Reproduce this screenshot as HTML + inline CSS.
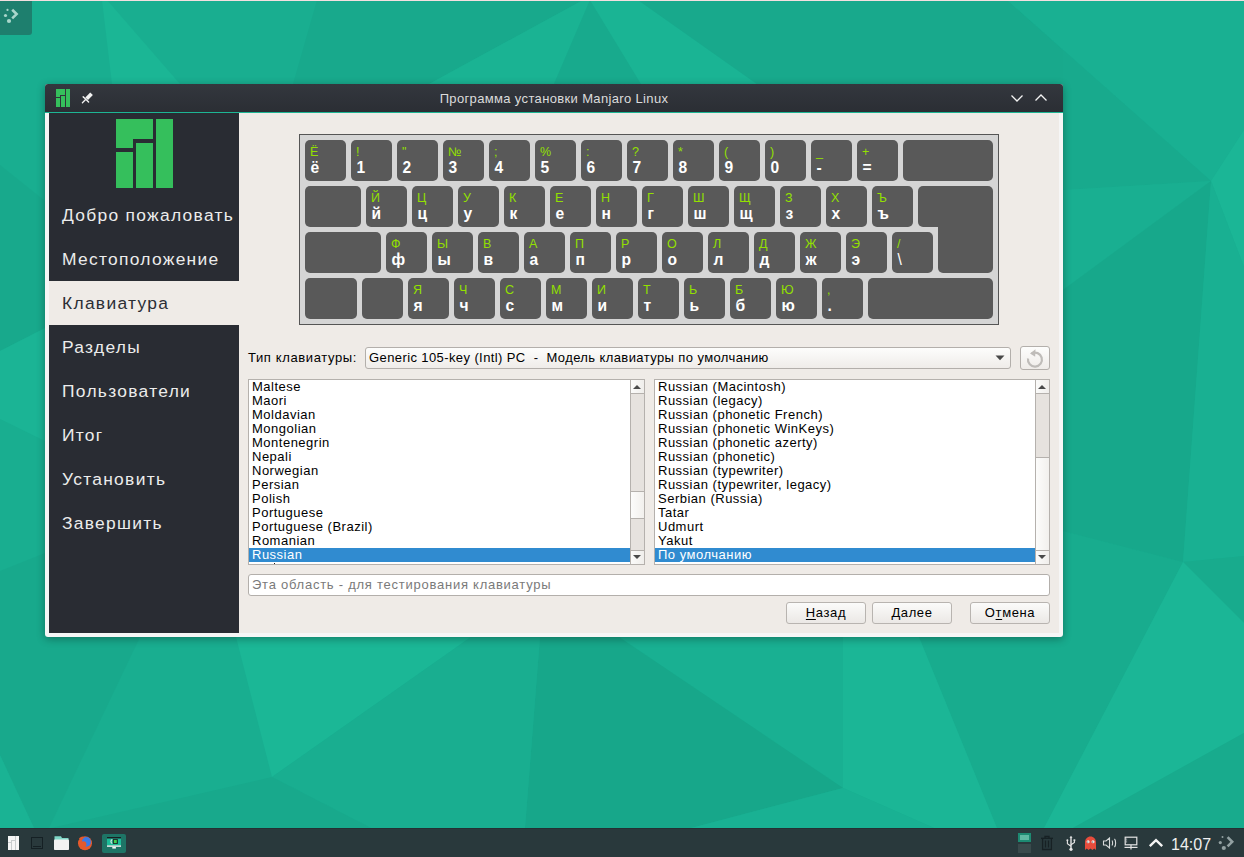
<!DOCTYPE html>
<html><head><meta charset="utf-8">
<style>
*{margin:0;padding:0;box-sizing:border-box}
html,body{width:1244px;height:857px;overflow:hidden;background:#19b092;font-family:"Liberation Sans",sans-serif}
.a{position:absolute}
#bg{position:absolute;left:0;top:0;display:block}
#topline{left:0;top:0;width:1244px;height:1px;background:#f4dfe0}
#tlbtn{left:0;top:1px;width:32px;height:34px;background:#1e7f6e;border-bottom-right-radius:3px}
#win{left:45px;top:84px;width:1018px;height:553px;background:#f6f6f6;border-radius:3px;box-shadow:0 2px 8px rgba(0,0,0,.32)}
#title{left:45px;top:84px;width:1018px;height:28px;background:linear-gradient(#33373e,#2b2e34);border-radius:3px 3px 0 0}
#ttext{left:0;top:85px;width:1108px;text-align:center;font-size:13px;line-height:28px;color:#dcdcdc;letter-spacing:.35px;white-space:nowrap}
#tline{left:45px;top:112px;width:1018px;height:1px;background:#1db594}
#content{left:49px;top:113px;width:1010px;height:520px;background:#efebe7}
#side{left:49px;top:113px;width:190px;height:520px;background:#292c33}
.si{position:absolute;left:49px;width:190px;height:44px;font-size:17.4px;letter-spacing:1.3px;color:#ececec;white-space:nowrap}
.si span{position:absolute;left:13px;top:0;line-height:1}
.si.sel{background:#efebe7;color:#2b2e35}
#kb{left:299px;top:134px;width:700px;height:191px;background:#d5d5d5;border:1px solid #555}
.k{position:absolute;height:41px;background:#595959;border-radius:5px}
.k b{position:absolute;left:5.5px;top:19.6px;font-size:15.6px;color:#fff;font-weight:bold;line-height:1}
.k i{position:absolute;left:5px;top:6px;font-size:12.5px;color:#93e000;font-style:normal;line-height:1}
.txt{position:absolute;font-size:13px;color:#000;white-space:nowrap;letter-spacing:.4px;line-height:1}
.list{position:absolute;background:#fff;border:1px solid #b5b1ad;overflow:hidden}
.row{position:absolute;left:0;height:14px;width:100%;font-size:13px;line-height:14px;padding-left:3px;white-space:nowrap;letter-spacing:.5px;color:#000}
.row.s{background:#308bd0;color:#fff}
.sb{position:absolute;top:0;width:15px;bottom:0;background:#e6e2de;border-left:1px solid #b5b1ad}
.btn{position:absolute;height:22px;border:1px solid #b8b4b0;border-radius:3px;background:linear-gradient(#fbfbfa,#ebe8e5);font-size:13px;text-align:center;line-height:20px;color:#000;letter-spacing:.6px}
#tb{left:0;top:828px;width:1244px;height:29px;background:#29393c;border-top:1px solid #243034}
.combo{border:1px solid #b3afab;border-radius:3px;background:linear-gradient(#fdfdfc,#efece9)}
.inp{border:1px solid #b3afab;border-radius:3px;background:#fff}
.sbb{position:absolute;left:0;width:14px;height:14px;background:linear-gradient(90deg,#fbfbfa,#efedea)}
.sbb:first-child{border-bottom:1px solid #b5b1ad}
.sbb:last-child{border-top:1px solid #b5b1ad}
.thumb{position:absolute;left:0;width:14px;background:linear-gradient(90deg,#fcfcfb,#f1efec);border-top:1px solid #b5b1ad;border-bottom:1px solid #b5b1ad}
.up{position:absolute;left:2px;top:5px;width:0;height:0;border-left:4px solid transparent;border-right:4px solid transparent;border-bottom:4px solid #4a4a4a}
.dn{position:absolute;left:2px;top:4px;width:0;height:0;border-left:4px solid transparent;border-right:4px solid transparent;border-top:4px solid #4a4a4a}
.btn u{text-underline-offset:2px}

</style></head><body>
<svg id="bg" width="1244" height="857" viewBox="0 0 1244 857">
<rect width="1244" height="857" fill="#19ae90"/>
<polygon points="102,0 107,0 180,84 112,84" fill="#1bb695"/>
<polygon points="317,0 583,0 429,84 293,84" fill="#18a98c"/>
<polygon points="583,0 590,0 554,84 429,84" fill="#1ab393"/>
<polygon points="590,0 554,84 641,84" fill="#18aa8d"/>
<polygon points="590,0 638,0 757,84 641,84" fill="#1ab494"/>
<polygon points="638,0 1007,0 1063,50 1063,84 757,84" fill="#18a98c"/>
<polygon points="1007,0 1244,0 1244,130 1211,181" fill="#19b092"/>
<polygon points="1211,181 1244,130 1244,267" fill="#1bb696"/>
<polygon points="1007,0 1211,181 1063,190 1063,50" fill="#18aa8d"/>
<polygon points="1063,190 1211,181 1063,290" fill="#19af91"/>
<polygon points="919,637 1063,637 1063,531 1183,562 1044,828 997,828" fill="#18ac8e"/>
<polygon points="843,637 919,637 997,828 934,828 843,788" fill="#1bb696"/>
<polygon points="619,637 843,637 843,788" fill="#19b092"/>
<polygon points="540,637 619,637 843,788 691,828 525,828" fill="#17a78a"/>
<polygon points="691,828 843,788 934,828" fill="#19b193"/>
<polygon points="236,637 471,637 272,777" fill="#1bb796"/>
<polygon points="471,637 540,637 525,828 371,828 272,777" fill="#19ae90"/>
<polygon points="51,828 272,777 371,828" fill="#18a98c"/>
<polygon points="0,637 140,637 49,828 34,828 0,755" fill="#18a98c"/>
<polygon points="0,755 34,828 0,828" fill="#1ab394"/>
<polygon points="0,165 45,201 45,328 0,351" fill="#18a98c"/>
<polygon points="0,351 45,328 45,441 0,419" fill="#1bb495"/>
<polygon points="0,571 45,553 45,637 0,637" fill="#18a98c"/>
<polygon points="1063,290 1211,181 1183,562 1063,531" fill="#17a88b"/>
<polygon points="1211,181 1244,267 1244,556 1183,562" fill="#19b092"/>
<polygon points="1183,562 1244,556 1244,623" fill="#18ab8d"/>
<polygon points="1183,562 1244,623 1244,733 1073,828 1044,828" fill="#1bb696"/>
<polygon points="1073,828 1244,733 1244,828" fill="#18ab8d"/>
</svg>

<div id="topline" class="a"></div>
<div id="tlbtn" class="a"></div>
<svg class="a" style="left:0;top:0" width="32" height="34" viewBox="0 0 32 34"><g fill="#a9d6cb"><circle cx="7.5" cy="9.9" r="1.1"/><circle cx="5.5" cy="15.5" r="1.6"/><circle cx="9" cy="21" r="2.1"/></g><path d="M12.2 9.8 L16.6 14.1 L12.2 18.4" fill="none" stroke="#a9d6cb" stroke-width="2.6"/></svg>

<div id="win" class="a"></div>
<div id="title" class="a"></div>
<svg class="a" style="left:56px;top:89px" width="14" height="18" viewBox="0 0 14 18"><g fill="#35bf5c"><path d="M0 0H9V6H4V8H0Z"/><rect x="0" y="9" width="4" height="9"/><rect x="5" y="7" width="4" height="11"/><rect x="10" y="0" width="4" height="18"/></g></svg>
<svg class="a" style="left:80px;top:90px" width="15" height="15" viewBox="0 0 15 15"><g stroke="#f2f2f2" stroke-linecap="round" fill="none"><path d="M3.2 6.7L8.6 12.1" stroke-width="1.4"/><path d="M5.4 9.8L2.4 12.8" stroke-width="1.3"/></g><path d="M5.3 7.4L10.2 2.4L12.9 5.1L8 10Z" fill="#f2f2f2"/></svg>
<div id="ttext" class="a">Программа установки Manjaro Linux</div>
<svg class="a" style="left:1009px;top:92px" width="40" height="12" viewBox="0 0 40 12"><g fill="none" stroke="#f4f4f4" stroke-width="1.3"><path d="M2.5 3.5 L8 9 L13.5 3.5"/><path d="M26.5 8.5 L32 3 L37.5 8.5"/></g></svg>
<div id="tline" class="a"></div>
<div id="content" class="a"></div>

<div id="side" class="a"></div>
<svg class="a" style="left:116px;top:119px" width="57" height="69" viewBox="0 0 57 69"><g fill="#35bf5c"><path d="M0 0H37V20H17V29H0Z"/><rect x="0" y="33" width="17" height="36"/><rect x="20" y="24" width="17" height="45"/><rect x="40" y="0" width="17" height="69"/></g></svg>
<div class="si" style="top:193px"><span style="top:14px">Добро пожаловать</span></div>
<div class="si" style="top:237px"><span style="top:14px">Местоположение</span></div>
<div class="si sel" style="top:281px"><span style="top:14px">Клавиатура</span></div>
<div class="si" style="top:325px"><span style="top:14px">Разделы</span></div>
<div class="si" style="top:369px"><span style="top:14px">Пользователи</span></div>
<div class="si" style="top:413px"><span style="top:14px">Итог</span></div>
<div class="si" style="top:457px"><span style="top:14px">Установить</span></div>
<div class="si" style="top:501px"><span style="top:14px">Завершить</span></div>

<div id="kb" class="a"></div>
<div class="k" style="left:305px;top:140px;width:41px"><i>Ё</i><b>ё</b></div>
<div class="k" style="left:351px;top:140px;width:41px"><i>!</i><b>1</b></div>
<div class="k" style="left:397px;top:140px;width:41px"><i>"</i><b>2</b></div>
<div class="k" style="left:443px;top:140px;width:41px"><i>№</i><b>3</b></div>
<div class="k" style="left:489px;top:140px;width:41px"><i>;</i><b>4</b></div>
<div class="k" style="left:535px;top:140px;width:41px"><i>%</i><b>5</b></div>
<div class="k" style="left:581px;top:140px;width:41px"><i>:</i><b>6</b></div>
<div class="k" style="left:627px;top:140px;width:41px"><i>?</i><b>7</b></div>
<div class="k" style="left:673px;top:140px;width:41px"><i>*</i><b>8</b></div>
<div class="k" style="left:719px;top:140px;width:41px"><i>(</i><b>9</b></div>
<div class="k" style="left:765px;top:140px;width:41px"><i>)</i><b>0</b></div>
<div class="k" style="left:811px;top:140px;width:41px"><i>_</i><b>-</b></div>
<div class="k" style="left:857px;top:140px;width:41px"><i>+</i><b>=</b></div>
<div class="k" style="left:903px;top:140px;width:90px"></div>
<div class="k" style="left:305px;top:186px;width:56px"></div>
<div class="k" style="left:366px;top:186px;width:41px"><i>Й</i><b>й</b></div>
<div class="k" style="left:412px;top:186px;width:41px"><i>Ц</i><b>ц</b></div>
<div class="k" style="left:458px;top:186px;width:41px"><i>У</i><b>у</b></div>
<div class="k" style="left:504px;top:186px;width:41px"><i>К</i><b>к</b></div>
<div class="k" style="left:550px;top:186px;width:41px"><i>Е</i><b>е</b></div>
<div class="k" style="left:596px;top:186px;width:41px"><i>Н</i><b>н</b></div>
<div class="k" style="left:642px;top:186px;width:41px"><i>Г</i><b>г</b></div>
<div class="k" style="left:688px;top:186px;width:41px"><i>Ш</i><b>ш</b></div>
<div class="k" style="left:734px;top:186px;width:41px"><i>Щ</i><b>щ</b></div>
<div class="k" style="left:780px;top:186px;width:41px"><i>З</i><b>з</b></div>
<div class="k" style="left:826px;top:186px;width:41px"><i>Х</i><b>х</b></div>
<div class="k" style="left:872px;top:186px;width:41px"><i>Ъ</i><b>ъ</b></div>
<div class="k" style="left:918px;top:186px;width:75px;height:41px"></div>
<div class="k" style="left:938px;top:200px;width:55px;height:73px;border-top-left-radius:0;border-top-right-radius:0"></div>
<div class="k" style="left:305px;top:232px;width:76px"></div>
<div class="k" style="left:386px;top:232px;width:41px"><i>Ф</i><b>ф</b></div>
<div class="k" style="left:432px;top:232px;width:41px"><i>Ы</i><b>ы</b></div>
<div class="k" style="left:478px;top:232px;width:41px"><i>В</i><b>в</b></div>
<div class="k" style="left:524px;top:232px;width:41px"><i>А</i><b>а</b></div>
<div class="k" style="left:570px;top:232px;width:41px"><i>П</i><b>п</b></div>
<div class="k" style="left:616px;top:232px;width:41px"><i>Р</i><b>р</b></div>
<div class="k" style="left:662px;top:232px;width:41px"><i>О</i><b>о</b></div>
<div class="k" style="left:708px;top:232px;width:41px"><i>Л</i><b>л</b></div>
<div class="k" style="left:754px;top:232px;width:41px"><i>Д</i><b>д</b></div>
<div class="k" style="left:800px;top:232px;width:41px"><i>Ж</i><b>ж</b></div>
<div class="k" style="left:846px;top:232px;width:41px"><i>Э</i><b>э</b></div>
<div class="k" style="left:892px;top:232px;width:41px"><i>/</i><b style="font-weight:normal">\</b></div>
<div class="k" style="left:305px;top:278px;width:52px"></div>
<div class="k" style="left:362px;top:278px;width:41px"></div>
<div class="k" style="left:408px;top:278px;width:41px"><i>Я</i><b>я</b></div>
<div class="k" style="left:454px;top:278px;width:41px"><i>Ч</i><b>ч</b></div>
<div class="k" style="left:500px;top:278px;width:41px"><i>С</i><b>с</b></div>
<div class="k" style="left:546px;top:278px;width:41px"><i>М</i><b>м</b></div>
<div class="k" style="left:592px;top:278px;width:41px"><i>И</i><b>и</b></div>
<div class="k" style="left:638px;top:278px;width:41px"><i>Т</i><b>т</b></div>
<div class="k" style="left:684px;top:278px;width:41px"><i>Ь</i><b>ь</b></div>
<div class="k" style="left:730px;top:278px;width:41px"><i>Б</i><b>б</b></div>
<div class="k" style="left:776px;top:278px;width:41px"><i>Ю</i><b>ю</b></div>
<div class="k" style="left:822px;top:278px;width:41px"><i>,</i><b>.</b></div>
<div class="k" style="left:868px;top:278px;width:125px"></div>

<div class="txt" style="left:248px;top:351px;letter-spacing:.62px">Тип клавиатуры:</div>
<div class="combo a" style="left:365px;top:347px;width:646px;height:22px"></div>
<div class="txt" style="left:369px;top:351px">Generic 105-key (Intl) PC&nbsp; -&nbsp; Модель клавиатуры по умолчанию</div>
<svg class="a" style="left:995px;top:355px" width="10" height="6" viewBox="0 0 10 6"><path d="M0.5 0.5H9.5L5 5.2Z" fill="#484848"/></svg>
<div class="combo a" style="left:1020px;top:346px;width:30px;height:24px"></div>
<svg class="a" style="left:1024px;top:348px" width="22" height="20" viewBox="0 0 22 20"><g fill="none" stroke="#bfbcb9" stroke-width="2.2"><path d="M7.6 5.4 A7 7 0 1 1 4.0 10.5"/></g><path d="M11.5 1.2 L6.0 5.6 L11.2 8.8Z" fill="#bfbcb9"/></svg>
<div class="list" style="left:248px;top:379px;width:397px;height:186px">
<div class="row" style="top:0px">Maltese</div>
<div class="row" style="top:14px">Maori</div>
<div class="row" style="top:28px">Moldavian</div>
<div class="row" style="top:42px">Mongolian</div>
<div class="row" style="top:56px">Montenegrin</div>
<div class="row" style="top:70px">Nepali</div>
<div class="row" style="top:84px">Norwegian</div>
<div class="row" style="top:98px">Persian</div>
<div class="row" style="top:112px">Polish</div>
<div class="row" style="top:126px">Portuguese</div>
<div class="row" style="top:140px">Portuguese (Brazil)</div>
<div class="row" style="top:154px">Romanian</div>
<div class="row s" style="top:168px">Russian</div>
<div class="row" style="top:182px">Serbian</div>
<div class="sb" style="left:381px"><div class="sbb" style="top:0"><div class="up"></div></div><div class="thumb" style="top:111px;height:28px"></div><div class="sbb" style="bottom:0"><div class="dn"></div></div></div>
</div>
<div class="list" style="left:654px;top:379px;width:396px;height:186px">
<div class="row" style="top:0px">Russian (Macintosh)</div>
<div class="row" style="top:14px">Russian (legacy)</div>
<div class="row" style="top:28px">Russian (phonetic French)</div>
<div class="row" style="top:42px">Russian (phonetic WinKeys)</div>
<div class="row" style="top:56px">Russian (phonetic azerty)</div>
<div class="row" style="top:70px">Russian (phonetic)</div>
<div class="row" style="top:84px">Russian (typewriter)</div>
<div class="row" style="top:98px">Russian (typewriter, legacy)</div>
<div class="row" style="top:112px">Serbian (Russia)</div>
<div class="row" style="top:126px">Tatar</div>
<div class="row" style="top:140px">Udmurt</div>
<div class="row" style="top:154px">Yakut</div>
<div class="row s" style="top:168px">По умолчанию</div>
<div class="sb" style="left:380px"><div class="sbb" style="top:0"><div class="up"></div></div><div class="thumb" style="top:77px;height:94px"></div><div class="sbb" style="bottom:0"><div class="dn"></div></div></div>
</div>
<div class="inp a" style="left:248px;top:574px;width:802px;height:22px"></div>
<div class="txt" style="left:252px;top:578px;color:#7a7a7a;letter-spacing:.75px">Эта область - для тестирования клавиатуры</div>
<div class="btn" style="left:786px;top:602px;width:80px"><u>Н</u>азад</div>
<div class="btn" style="left:872px;top:602px;width:80px"><u>Д</u>алее</div>
<div class="btn" style="left:970px;top:602px;width:80px">О<u>т</u>мена</div>
<div class="a" style="left:274px;top:563px;width:1px;height:1px;background:#222"></div>

<div id="tb" class="a"></div>
<svg class="a" style="left:8px;top:836px" width="11" height="14" viewBox="0 0 11 14"><g fill="#f6f6f6"><path d="M0 0H7V4H3V6H0Z"/><rect x="0" y="7" width="3" height="7"/><rect x="4" y="5" width="3" height="9"/><rect x="8" y="0" width="3" height="14"/></g><g fill="#c9cdce"><rect x="3" y="4" width="1" height="10"/><rect x="7" y="0" width="1" height="14"/><rect x="0" y="6" width="3" height="1"/><rect x="3" y="4" width="4" height="1"/></g></svg>
<div class="a" style="left:31px;top:837px;width:12px;height:12px;border:1px solid #152024"></div>
<div class="a" style="left:33px;top:846px;width:8px;height:1px;background:#152024"></div>
<svg class="a" style="left:53px;top:835px" width="17" height="16" viewBox="0 0 17 16"><path d="M1.5 1.2H8L9 3H15.5V6H1.5Z" fill="#7fd6c6"/><rect x="1" y="4.6" width="15" height="10.4" rx="0.8" fill="#f2f2f2"/></svg>
<svg class="a" style="left:77px;top:835px" width="16" height="16" viewBox="0 0 16 16"><circle cx="8" cy="8.2" r="7" fill="#e55a2c"/><ellipse cx="9.4" cy="6.9" rx="4.5" ry="4.9" fill="#3b7ae6"/><circle cx="6.4" cy="9.2" r="3" fill="#e55a2c"/><path d="M2 3.5C3.5 1.8 5.5 1.3 6.5 2.2C5.8 3.2 5 4.2 4.6 5.6Z" fill="#e55a2c"/></svg>
<div class="a" style="left:102px;top:834px;width:24px;height:19px;background:#1e7566;border-radius:2px"></div>
<svg class="a" style="left:106px;top:836px" width="16" height="14" viewBox="0 0 16 14"><rect x="1" y="1" width="14" height="1.6" fill="#1b1f22"/><rect x="1" y="2.6" width="14" height="6.8" fill="#1cbc98"/><rect x="1" y="9.4" width="14" height="1.4" fill="#f4f4f4"/><rect x="6.3" y="10.8" width="3.6" height="1.8" fill="#f4f4f4"/><rect x="6.8" y="3.1" width="5" height="4.8" fill="#1b1f22"/><rect x="7.8" y="3.9" width="3" height="3.2" fill="#3fcf52"/><path d="M6.3 3.4 A2.3 2.3 0 0 0 6.3 7.6" fill="none" stroke="#e8e8e8" stroke-width="1.1"/></svg>

<div class="a" style="left:1018px;top:833px;width:13px;height:9px;background:#1d8a72;border:1px solid #1d8a72"><div style="position:absolute;left:1px;top:1px;right:1px;bottom:1px;background:#5fb8a2"></div></div>
<div class="a" style="left:1018px;top:844px;width:13px;height:9px;background:#3a4a4c"></div>
<svg class="a" style="left:1040px;top:835px" width="14" height="16" viewBox="0 0 14 16"><g fill="none" stroke="#172124" stroke-width="1.3"><path d="M1 3.3H13"/><path d="M5 3V1.5H9V3"/><path d="M2.6 3.5V14.5H11.4V3.5"/><path d="M5.5 5.5V12.5M8.5 5.5V12.5"/></g></svg>
<svg class="a" style="left:1066px;top:835px" width="10" height="17" viewBox="0 0 10 17"><g fill="#e6e6e6"><circle cx="5" cy="14.3" r="1.6"/><path d="M4.3 2H5.7V14H4.3Z"/><path d="M3.5 2.8L5 0.8L6.5 2.8Z"/></g><g fill="none" stroke="#e6e6e6" stroke-width="1.1"><path d="M5 11.2L1.4 8.6V5.6"/><path d="M5 9.8L8.4 7.4V5.4"/></g><circle cx="1.4" cy="5.2" r="1" fill="#e6e6e6"/><rect x="7.5" y="4.3" width="1.8" height="1.8" fill="#e6e6e6"/></svg>
<svg class="a" style="left:1084px;top:836px" width="13" height="15" viewBox="0 0 13 15"><path d="M1 6.5C1 3 3.4 0.6 6.5 0.6S12 3 12 6.5V14L10.2 12.6L8.4 14L6.5 12.6L4.6 14L2.8 12.6L1 14Z" fill="#e74c3c"/><circle cx="4.1" cy="5.8" r="1.5" fill="#f2f2f2"/><circle cx="9" cy="5.8" r="1.5" fill="#f2f2f2"/><circle cx="3.8" cy="6" r="0.6" fill="#333"/><circle cx="8.7" cy="6" r="0.6" fill="#333"/></svg>
<svg class="a" style="left:1102px;top:837px" width="16" height="12" viewBox="0 0 16 12"><g fill="none" stroke="#d7dada" stroke-width="1.1"><path d="M1.5 4H4L7.5 1V11L4 8H1.5Z"/><path d="M10 3.5C10.8 4.5 10.8 7.5 10 8.5"/><path d="M12.5 1.8C14 3.5 14 8.5 12.5 10.2"/></g></svg>
<svg class="a" style="left:1124px;top:836px" width="14" height="15" viewBox="0 0 14 15"><g fill="none" stroke="#e4e4e4" stroke-width="1.2"><rect x="1.2" y="1.2" width="11.6" height="7.6"/><path d="M7 9V13.6"/><path d="M0.5 11.4H13.5"/></g><path d="M2.6 2.6V7" stroke="#e4e4e4" stroke-width="0.8" stroke-dasharray="1 1"/></svg>
<svg class="a" style="left:1148px;top:838px" width="16" height="10" viewBox="0 0 16 10"><path d="M1.8 8.2L8 2.2L14.2 8.2" fill="none" stroke="#f4f4f4" stroke-width="2.4"/></svg>
<div class="a" style="left:1171px;top:836px;font-size:16px;line-height:17px;color:#f0f0f0;letter-spacing:0px">14:07</div>
<svg class="a" style="left:1217px;top:834px" width="20" height="18" viewBox="0 0 20 18"><g fill="#93a1a2"><circle cx="5.5" cy="3" r="1"/><circle cx="3.3" cy="8.6" r="1.6"/><circle cx="6.8" cy="14" r="2.1"/></g><path d="M10.6 3.2L15.2 7.8L10.6 12.4" fill="none" stroke="#93a1a2" stroke-width="2.6"/></svg>


</body></html>
